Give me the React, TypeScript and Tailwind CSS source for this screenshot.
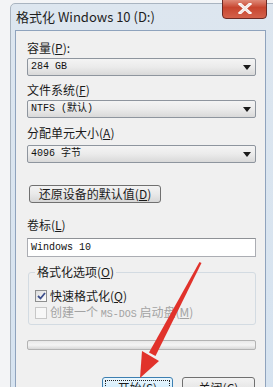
import React from "react";

const cjk = { fontFamily: '"Noto Sans CJK SC", "Noto Sans", sans-serif' };
const mono = { fontFamily: '"Liberation Mono", "Noto Sans CJK SC", monospace' };

function U({ c }: { c: string }) {
  return (
    <span>
      (<span className="underline">{c}</span>)
    </span>
  );
}

function Label({ text, k, colon, mt }: { text: string; k: string; colon?: boolean; mt: string }) {
  return (
    <div className={`h-[14px] text-[12px] leading-[14px] text-[#1b1b1b] ${mt}`} style={cjk}>
      {text}
      <U c={k} />
      {colon ? ":" : ""}
    </div>
  );
}

function Combo({ value, mt }: { value: string; mt: string }) {
  return (
    <div
      className={`flex h-[18px] w-[229px] items-center justify-between rounded-[2px] border border-[#8e959e] bg-gradient-to-b from-[#f4f4f4] via-[#ebebeb] to-[#d9d9d9] pl-[3px] pr-[4px] ${mt}`}
    >
      <span className="text-[10px] leading-[12px] text-[#111]" style={mono}>
        {value}
      </span>
      <svg width="8" height="5" viewBox="0 0 8 5">
        <path d="M0 0 H8 L4 5 Z" fill="#1a1a1a" />
      </svg>
    </div>
  );
}

export default function App() {
  return (
    <div className="relative h-[387px] w-[273px] overflow-hidden bg-[#f3f4f6]">
      {/* window */}
      <div className="absolute left-[10px] top-[3px] h-[400px] w-[270px] rounded-tl-[5px] border border-[#a9b4c0] bg-gradient-to-b from-[#dde6ef] to-[#d6e3f0]">
        {/* title */}
        <div className="flex h-[26px] items-center pl-[5px] text-[13px] text-[#1e1e1e]" style={cjk}>
          格式化 Windows 10 (D:)
        </div>
        {/* panel */}
        <div className="ml-[4px] h-[380px] w-[251px] border border-[#8fa3bd] bg-[#f0f0f0] pl-[11px]">
          <Label text="容量" k="P" colon mt="mt-[10px]" />
          <Combo value="284 GB" mt="mt-[3px]" />
          <Label text="文件系统" k="F" mt="mt-[7px]" />
          <Combo value="NTFS (默认)" mt="mt-[3px]" />
          <Label text="分配单元大小" k="A" mt="mt-[8px]" />
          <Combo value="4096 字节" mt="mt-[5px]" />
          <div
            className="ml-[2px] mt-[22px] flex h-[18px] w-[132px] items-center justify-center rounded-[3px] border border-[#707070] bg-gradient-to-b from-[#f3f3f3] via-[#e9e9e9] to-[#d7d7d7] text-[12px] leading-[14px] text-[#1b1b1b]"
            style={cjk}
          >
            还原设备的默认值<U c="D" />
          </div>
          <Label text="卷标" k="L" mt="mt-[15px]" />
          <div className="mt-[6px] flex h-[19px] w-[229px] items-center border border-[#abadb3] border-t-[#8e9196] bg-white pl-[3px]">
            <span className="text-[10px] leading-[12px] text-[#111]" style={mono}>
              Windows 10
            </span>
          </div>
          {/* group */}
          <div className="relative ml-[1px] mt-[15px] h-[53px] w-[228px] rounded-[3px] border border-[#d3dbe2] pl-[6px] pt-[16px]">
            <div
              className="absolute left-[6px] top-[-8px] bg-[#f0f0f0] px-[2px] text-[12px] leading-[14px] text-[#1b1b1b]"
              style={cjk}
            >
              格式化选项<U c="O" />
            </div>
            <div className="flex h-[14px] items-center gap-[3px] text-[12px] leading-[14px] text-[#1b1b1b]" style={cjk}>
              <div className="flex h-[12px] w-[12px] items-center justify-center border border-[#8e8f8f] bg-gradient-to-br from-[#dcdcdc] to-[#ffffff]">
                <svg width="9" height="8" viewBox="0 0 9 8">
                  <path d="M1 4 L3.5 6.5 L8 1" stroke="#3d4f8c" strokeWidth="1.8" fill="none" />
                </svg>
              </div>
              <span>
                快速格式化<U c="Q" />
              </span>
            </div>
            <div className="mt-[3px] flex h-[14px] items-center gap-[3px] text-[12px] leading-[14px] text-[#a3a3a3]" style={cjk}>
              <div className="h-[12px] w-[12px] border border-[#c7c7c7] bg-[#f7f7f7]" />
              <span>
                创建一个 <span style={mono} className="text-[10px]">MS-DOS</span> 启动盘<U c="M" />
              </span>
            </div>
          </div>
          {/* progress */}
          <div className="mt-[15px] h-[10px] w-[229px] rounded-[2px] border border-[#b3b3b3] bg-gradient-to-b from-[#e8e8e8] via-[#f4f4f4] to-[#d8d8d8]" />
          {/* buttons */}
          <div className="mt-[27px] flex gap-[9px] pl-[75px]">
            <div className="flex h-[22px] w-[71px] items-center justify-center rounded-[3px] border border-[#3c7fb1] bg-gradient-to-b from-[#eaf6fd] to-[#bee6fd] p-[2px]">
              <div
                className="flex h-full w-full items-center justify-center border border-dotted border-[#222] text-[12px] leading-[14px] text-[#1b1b1b]"
                style={cjk}
              >
                开始<U c="S" />
              </div>
            </div>
            <div
              className="flex h-[22px] w-[73px] items-center justify-center rounded-[3px] border border-[#707070] bg-gradient-to-b from-[#f3f3f3] to-[#dadada] text-[12px] leading-[14px] text-[#1b1b1b]"
              style={cjk}
            >
              关闭<U c="C" />
            </div>
          </div>
        </div>
      </div>
      {/* close button */}
      <div className="absolute left-[222px] top-[-4px] flex h-[23px] w-[45px] items-end justify-center rounded-b-[4px] border border-[#6b2a24] bg-gradient-to-b from-[#e6a293] via-[#c7452f] to-[#d4614a] pb-[4px]">
        <svg width="14" height="11" viewBox="0 0 14 11">
          <path d="M2 1 L12 10 M12 1 L2 10" stroke="#ffffff" strokeWidth="3" strokeLinecap="square" />
          <path d="M2 1 L12 10 M12 1 L2 10" stroke="#f0e6e4" strokeWidth="1.6" />
        </svg>
      </div>
      {/* red arrow */}
      <svg className="absolute left-0 top-0" width="273" height="387" viewBox="0 0 273 387">
        <polygon points="199.5,262 201.5,263 155.5,356 149,352.5" fill="#e1322b" />
        <polygon points="142,351 159,361 140,378" fill="#e1322b" />
      </svg>
    </div>
  );
}
